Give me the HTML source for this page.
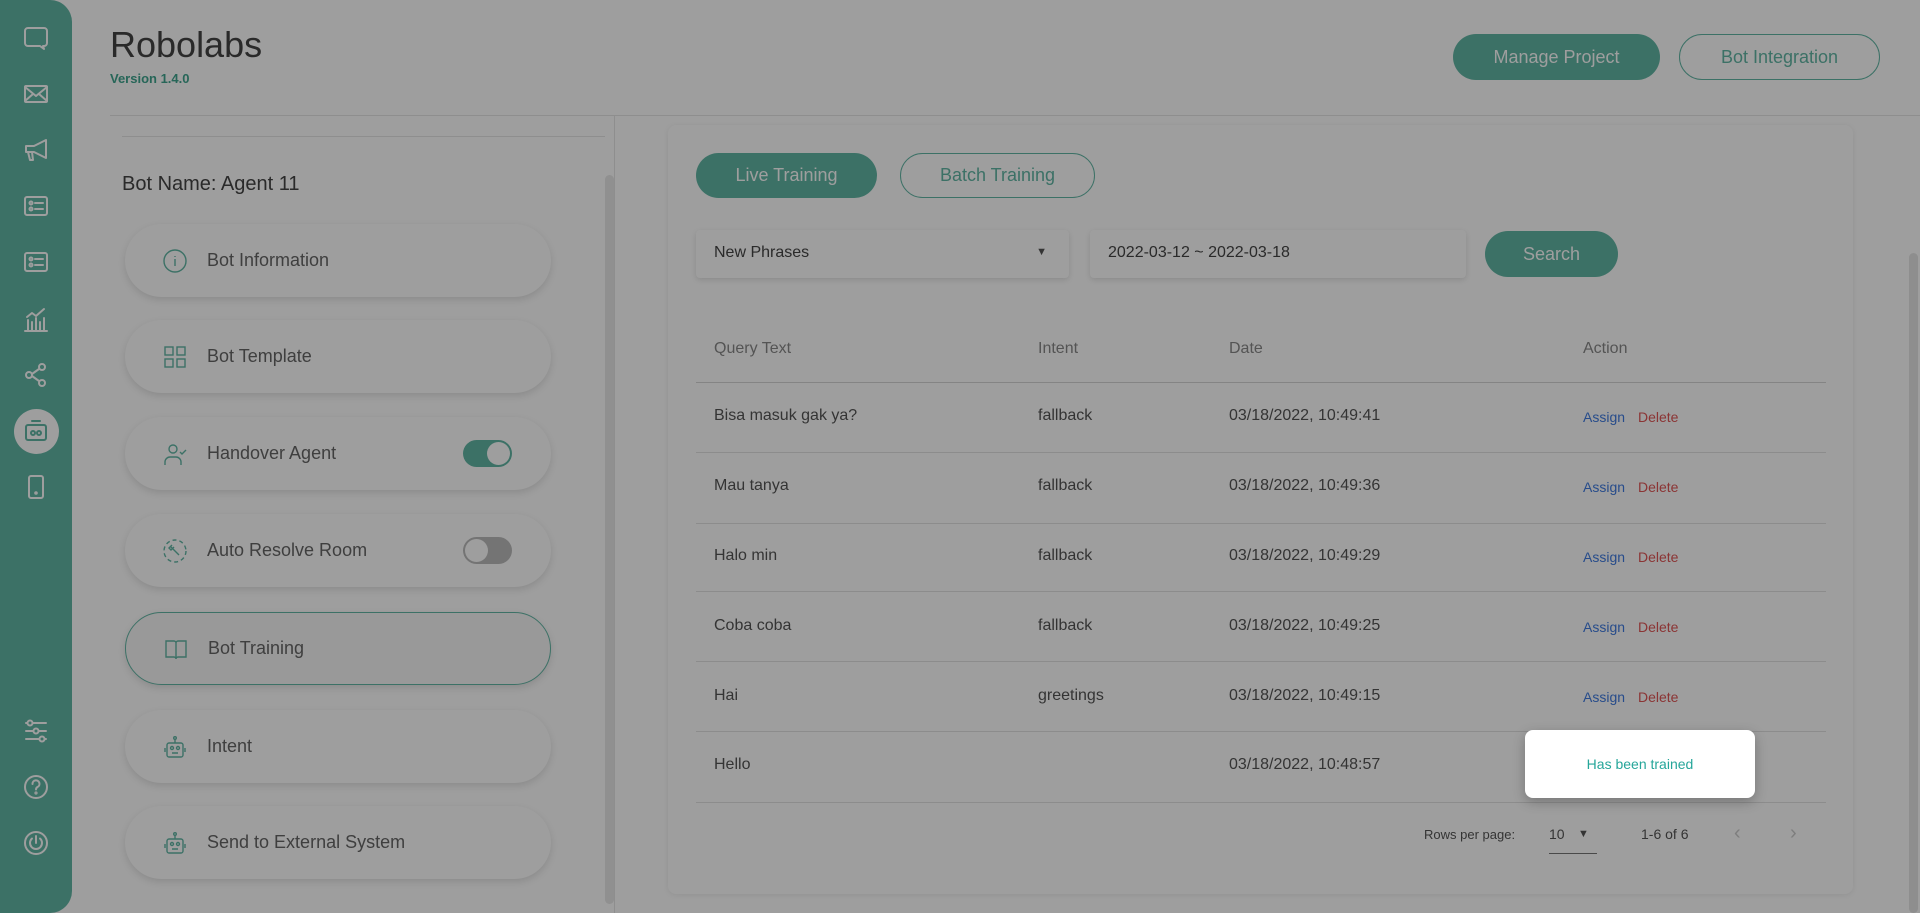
<!DOCTYPE html>
<html><head><meta charset="utf-8"><style>
*{margin:0;padding:0;box-sizing:border-box}
body{width:1920px;height:913px;overflow:hidden;background:#fff;font-family:"Liberation Sans",sans-serif;position:relative;color:#555}
.abs{position:absolute}
.side{left:0;top:0;width:72px;height:913px;background:#62b6a5;border-radius:0 22px 22px 0}
.si{position:absolute;left:22px;width:28px;height:28px}
.si svg{width:28px;height:28px;fill:none;stroke:#fff;stroke-width:2;stroke-linecap:round;stroke-linejoin:round}
.btn{border-radius:24px;display:flex;align-items:center;justify-content:center;font-size:18px}
.fill{background:#62b6a5;color:#fff}
.out{border:1.5px solid #62b6a5;color:#62b6a5;background:#fff}
.item{left:125px;width:426px;height:73px;border-radius:37px;background:#fff;box-shadow:0 3px 8px rgba(0,0,0,.12);display:flex;align-items:center;font-size:18px;color:#666}
.item svg{position:absolute;left:37px;width:26px;height:26px;fill:none;stroke:#62b6a5;stroke-width:1.4}
.item span{position:absolute;left:82px}
.tog{position:absolute;left:338px;width:49px;height:27px;border-radius:14px}
.tog i{position:absolute;top:2px;width:23px;height:23px;border-radius:50%;background:#fff}
.row{left:696px;width:1130px;border-top:1px solid #e3e3e3}
.cell{position:absolute;font-size:16px;color:#555}
.hd{color:#888}
.as{color:#3f7be0;font-size:14px}
.de{color:#e05555;font-size:14px}
</style></head><body>
<div class="abs side">
 <div class="si" style="top:24px"><svg viewBox="0 0 28 28"><path d="M6 4h16a3 3 0 0 1 3 3v12a3 3 0 0 1-3 3h-1l1 3-4-3H6a3 3 0 0 1-3-3V7a3 3 0 0 1 3-3z"/></svg></div>
 <div class="si" style="top:80px"><svg viewBox="0 0 28 28"><rect x="3" y="6" width="22" height="16" rx="1"/><path d="M3 7l11 9 11-9M3 21l8-7M25 21l-8-7"/></svg></div>
 <div class="si" style="top:136px"><svg viewBox="0 0 28 28"><path d="M4 10h8l12-6v18l-12-6H4zM6 16l2 8h3l-1-8"/></svg></div>
 <div class="si" style="top:192px"><svg viewBox="0 0 28 28"><rect x="3" y="5" width="22" height="18" rx="2"/><circle cx="9" cy="11" r="1.5"/><circle cx="9" cy="17" r="1.5"/><path d="M13 11h8M13 17h8"/></svg></div>
 <div class="si" style="top:248px"><svg viewBox="0 0 28 28"><rect x="3" y="5" width="22" height="18" rx="2"/><circle cx="9" cy="11" r="1.5"/><circle cx="9" cy="17" r="1.5"/><path d="M13 11h8M13 17h8"/></svg></div>
 <div class="si" style="top:306px"><svg viewBox="0 0 28 28"><path d="M3 25h22M6 24v-10M10 24v-8M14 24v-12M18 24v-8M22 24v-12M5 11l5-4 4 3 8-7"/></svg></div>
 <div class="si" style="top:361px"><svg viewBox="0 0 28 28"><circle cx="7" cy="14" r="3"/><circle cx="20" cy="6" r="3"/><circle cx="20" cy="22" r="3"/><path d="M10 13l7-5M10 15l7 5"/></svg></div>
 <div class="abs" style="left:14px;top:409px;width:45px;height:45px;border-radius:50%;background:#fff"></div>
 <div class="si" style="top:417px"><svg viewBox="0 0 28 28" style="stroke:#62b6a5"><rect x="4" y="8" width="20" height="15" rx="2"/><path d="M10 4h8"/><circle cx="11" cy="16" r="2"/><circle cx="17" cy="16" r="2"/></svg></div>
 <div class="si" style="top:473px"><svg viewBox="0 0 28 28"><rect x="7" y="3" width="14" height="22" rx="2"/><circle cx="14" cy="20" r=".8"/></svg></div>
 <div class="si" style="top:717px"><svg viewBox="0 0 28 28"><path d="M4 6h20M4 14h20M4 22h20"/><circle cx="8" cy="6" r="2.5" fill="#62b6a5"/><circle cx="14" cy="14" r="2.5" fill="#62b6a5"/><circle cx="20" cy="22" r="2.5" fill="#62b6a5"/></svg></div>
 <div class="si" style="top:773px"><svg viewBox="0 0 28 28"><circle cx="14" cy="14" r="11"/><path d="M10.5 11a3.5 3.5 0 1 1 5 3c-1 .6-1.5 1.3-1.5 2.5"/><circle cx="14" cy="20" r=".6"/></svg></div>
 <div class="si" style="top:829px"><svg viewBox="0 0 28 28"><circle cx="14" cy="14" r="11"/><path d="M10 9.5a6 6 0 1 0 8 0M14 7v7"/></svg></div>
</div>

<div class="abs" style="left:110px;top:24px;font-size:36px;color:#444">Robolabs</div>
<div class="abs" style="left:110px;top:71px;font-size:13px;font-weight:bold;color:#3fa58f">Version 1.4.0</div>
<div class="abs btn fill" style="left:1453px;top:34px;width:207px;height:46px">Manage Project</div>
<div class="abs btn out" style="left:1679px;top:34px;width:201px;height:46px">Bot Integration</div>
<div class="abs" style="left:110px;top:115px;width:1810px;border-top:1px solid #e6e6e6"></div>
<div class="abs" style="left:122px;top:136px;width:483px;border-top:1px solid #e6e6e6"></div>
<div class="abs" style="left:614px;top:116px;height:797px;border-left:1px solid #e6e6e6"></div>
<div class="abs" style="left:605px;top:175px;width:9px;height:729px;background:#e8e8e8;border-radius:5px"></div>
<div class="abs" style="left:122px;top:173px;font-size:20px;color:#444">Bot Name: Agent 11</div>

<div class="abs item" style="top:224px"><svg viewBox="0 0 26 26"><circle cx="13" cy="13" r="11"/><path d="M13 11v7M13 8v1"/></svg><span>Bot Information</span></div>
<div class="abs item" style="top:320px"><svg viewBox="0 0 26 26"><rect x="3" y="3" width="8" height="8"/><rect x="15" y="3" width="8" height="8"/><rect x="3" y="15" width="8" height="8"/><rect x="15" y="15" width="8" height="8"/></svg><span>Bot Template</span></div>
<div class="abs item" style="top:417px"><svg viewBox="0 0 26 26"><circle cx="11" cy="8" r="4"/><path d="M3 24v-3a5 5 0 0 1 5-5h6a5 5 0 0 1 5 5v3M18 11l2 2 4-4"/></svg><span>Handover Agent</span><div class="tog" style="background:#62b6a5"><i style="left:24px"></i></div></div>
<div class="abs item" style="top:514px"><svg viewBox="0 0 26 26"><circle cx="13" cy="13" r="11" stroke-dasharray="4 3"/><path d="M9 9l8 8M10 7l-3 3 2 2 3-3"/></svg><span>Auto Resolve Room</span><div class="tog" style="background:#bbb"><i style="left:2px"></i></div></div>
<div class="abs item" style="top:612px;border:1.5px solid #62b6a5;background:#f7f7f7"><svg viewBox="0 0 26 26"><path d="M3 5h8a2 2 0 0 1 2 2v16a2 2 0 0 0-2-2H3zM23 5h-8a2 2 0 0 0-2 2v16a2 2 0 0 1 2-2h8z"/></svg><span>Bot Training</span></div>
<div class="abs item" style="top:710px"><svg viewBox="0 0 26 26"><rect x="5" y="9" width="16" height="14" rx="2"/><path d="M13 9V5M3 14v4M23 14v4M10 19h6"/><circle cx="13" cy="4" r="1.3"/><circle cx="10" cy="14" r="1.5"/><circle cx="16" cy="14" r="1.5"/></svg><span>Intent</span></div>
<div class="abs item" style="top:806px"><svg viewBox="0 0 26 26"><rect x="5" y="9" width="16" height="14" rx="2"/><path d="M13 9V5M3 14v4M23 14v4M10 19h6"/><circle cx="13" cy="4" r="1.3"/><circle cx="10" cy="14" r="1.5"/><circle cx="16" cy="14" r="1.5"/></svg><span>Send to External System</span></div>

<div class="abs" style="left:668px;top:125px;width:1185px;height:769px;background:#fff;border-radius:8px;box-shadow:0 1px 6px rgba(0,0,0,.08)"></div>
<div class="abs" style="left:1909px;top:253px;width:9px;height:660px;background:#e6e6e6;border-radius:5px"></div>
<div class="abs btn fill" style="left:696px;top:153px;width:181px;height:45px">Live Training</div>
<div class="abs btn out" style="left:900px;top:153px;width:195px;height:45px">Batch Training</div>
<div class="abs" style="left:696px;top:230px;width:373px;height:48px;background:#fff;box-shadow:0 2px 6px rgba(0,0,0,.12);border-radius:4px"><span class="abs" style="left:18px;top:14px;font-size:16px;color:#444">New Phrases</span><span class="abs" style="right:22px;top:16px;font-size:11px;color:#555">▼</span></div>
<div class="abs" style="left:1090px;top:230px;width:376px;height:48px;background:#fff;box-shadow:0 2px 6px rgba(0,0,0,.12);border-radius:4px"><span class="abs" style="left:18px;top:14px;font-size:16px;color:#444">2022-03-12 ~ 2022-03-18</span></div>
<div class="abs btn fill" style="left:1485px;top:231px;width:133px;height:46px">Search</div>

<div class="cell hd" style="left:714px;top:340px">Query Text</div>
<div class="cell hd" style="left:1038px;top:340px">Intent</div>
<div class="cell hd" style="left:1229px;top:340px">Date</div>
<div class="cell hd" style="left:1583px;top:340px">Action</div>
<div class="abs row" style="top:382px;border-top-color:#d5d5d5"></div>
<div class="abs row" style="top:452px"></div>
<div class="abs row" style="top:523px"></div>
<div class="abs row" style="top:591px"></div>
<div class="abs row" style="top:661px"></div>
<div class="abs row" style="top:731px"></div>
<div class="abs row" style="top:802px"></div>

<div class="cell" style="left:714px;top:407px">Bisa masuk gak ya?</div><div class="cell" style="left:1038px;top:407px">fallback</div><div class="cell" style="left:1229px;top:407px">03/18/2022, 10:49:41</div><div class="cell as" style="left:1583px;top:409px">Assign</div><div class="cell de" style="left:1638px;top:409px">Delete</div>
<div class="cell" style="left:714px;top:477px">Mau tanya</div><div class="cell" style="left:1038px;top:477px">fallback</div><div class="cell" style="left:1229px;top:477px">03/18/2022, 10:49:36</div><div class="cell as" style="left:1583px;top:479px">Assign</div><div class="cell de" style="left:1638px;top:479px">Delete</div>
<div class="cell" style="left:714px;top:547px">Halo min</div><div class="cell" style="left:1038px;top:547px">fallback</div><div class="cell" style="left:1229px;top:547px">03/18/2022, 10:49:29</div><div class="cell as" style="left:1583px;top:549px">Assign</div><div class="cell de" style="left:1638px;top:549px">Delete</div>
<div class="cell" style="left:714px;top:617px">Coba coba</div><div class="cell" style="left:1038px;top:617px">fallback</div><div class="cell" style="left:1229px;top:617px">03/18/2022, 10:49:25</div><div class="cell as" style="left:1583px;top:619px">Assign</div><div class="cell de" style="left:1638px;top:619px">Delete</div>
<div class="cell" style="left:714px;top:687px">Hai</div><div class="cell" style="left:1038px;top:687px">greetings</div><div class="cell" style="left:1229px;top:687px">03/18/2022, 10:49:15</div><div class="cell as" style="left:1583px;top:689px">Assign</div><div class="cell de" style="left:1638px;top:689px">Delete</div>
<div class="cell" style="left:714px;top:756px">Hello</div><div class="cell" style="left:1229px;top:756px">03/18/2022, 10:48:57</div>

<div class="cell" style="left:1424px;top:827px;font-size:13px;color:#555">Rows per page:</div>
<div class="cell" style="left:1549px;top:826px;font-size:14px">10</div>
<div class="cell" style="left:1578px;top:828px;font-size:11px">▼</div>
<div class="abs" style="left:1549px;top:853px;width:48px;border-top:1px solid #777"></div>
<div class="cell" style="left:1641px;top:826px;font-size:14px">1-6 of 6</div>
<div class="cell" style="left:1734px;top:822px;font-size:20px;color:#ccc">‹</div>
<div class="cell" style="left:1790px;top:822px;font-size:20px;color:#ccc">›</div>

<div class="abs" style="left:0;top:0;width:1920px;height:913px;background:rgba(0,0,0,.38)"></div>
<div class="abs" style="left:1525px;top:730px;width:230px;height:68px;background:#fff;border-radius:8px;box-shadow:0 4px 12px rgba(0,0,0,.25);display:flex;align-items:center;justify-content:center;font-size:14px;color:#26a69a">Has been trained</div>
</body></html>
